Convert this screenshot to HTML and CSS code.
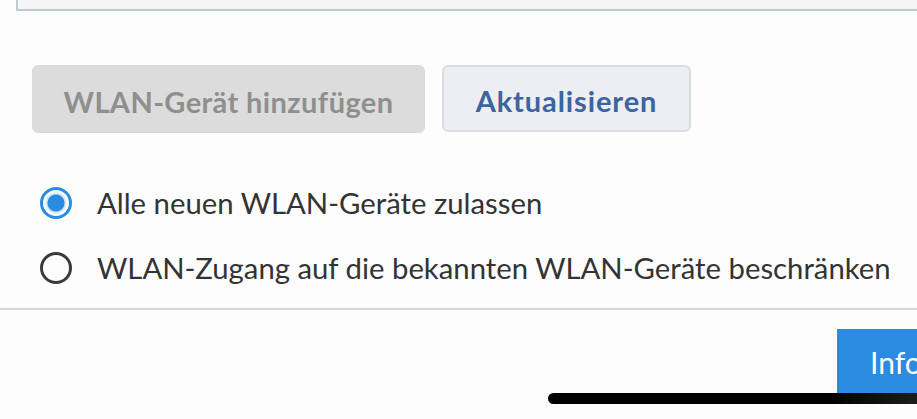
FILE: index.html
```html
<!DOCTYPE html>
<html>
	<head>
		<title>WLAN-Geräte</title>
		<link rel="stylesheet" href="styles.css">
	</head>
	<body>
		<div class="panel"></div>
		<div class="actions">
			<button class="btn btn-disabled" disabled>WLAN-Gerät hinzufügen</button>
			<button class="btn btn-light">Aktualisieren</button>
		</div>
		<form class="options">
			<label class="option">
				<input type="radio" name="access" checked>
				<span class="radio"></span>
				Alle neuen WLAN-Geräte zulassen
			</label>
			<label class="option">
				<input type="radio" name="access">
				<span class="radio"></span>
				WLAN-Zugang auf die bekannten WLAN-Geräte beschränken
			</label>
		</form>
		<div class="footer">
			<button class="btn-info">Info</button>
		</div>
		<div class="home-bar"></div>
	</body>
</html>
```

FILE: styles.css
```css
html, body {
	margin: 0;
	height: 100%;
	overflow: hidden;
}
body {
	background: #fdfdfd;
	font-family: Lato, "Noto Sans", sans-serif;
	color: #333;
	position: relative;
}
.panel {
	margin-left: 16px;
	height: 9px;
	background: #f5f5f5;
	border-left: 2px solid #bfcdd4;
	border-bottom: 2px solid #bccbd2;
}
.actions {
	display: flex;
	gap: 17px;
	margin-top: 54px;
	padding-left: 32px;
}
.btn {
	height: 68px;
	padding: 4px 0 0;
	border-radius: 6px;
	font: 700 29px Lato, sans-serif;
	letter-spacing: 0.4px;
}
.btn-disabled {
	width: 393px;
	background: #dcdcdc;
	color: #8f8f8f;
	border: 1px solid #dadada;
}
.btn-light {
	width: 249px;
	height: 67px;
	background: #eceef1;
	color: #3c64a0;
	border: 2px solid #d9dee3;
	letter-spacing: 0.9px;
}
.options {
	margin: 37px 0 0 40px;
}
.option {
	display: flex;
	align-items: center;
	height: 65px;
	font-size: 29.3px;
	color: #333;
}
.option input {
	display: none;
}
.radio {
	box-sizing: border-box;
	width: 32px;
	height: 32px;
	margin-right: 25px;
	border-radius: 50%;
	border: 3px solid #3a3a3a;
}
.option input:checked + .radio {
	border: 3px solid #2a8be0;
	background: radial-gradient(circle, #2a8be0 0 8px, #d6e9fa 9px 10px, #fff 11px);
}
.footer {
	margin-top: 8px;
	border-top: 2px solid #d8d8d8;
	display: flex;
	justify-content: flex-end;
	padding-top: 19px;
}
.btn-info {
	width: 80px;
	height: 70px;
	padding: 0 0 4px 33px;
	text-align: left;
	background: #2a8be0;
	color: #fff;
	border: none;
	font: 400 30px Lato, sans-serif;
	white-space: nowrap;
	overflow: hidden;
}
.home-bar {
	position: absolute;
	left: 548px;
	top: 393px;
	width: 400px;
	height: 11px;
	border-radius: 6px;
	background: linear-gradient(to right, #000 0, #000 70%, #1a1a1a 90%, #2a2a2a 100%);
}
```
